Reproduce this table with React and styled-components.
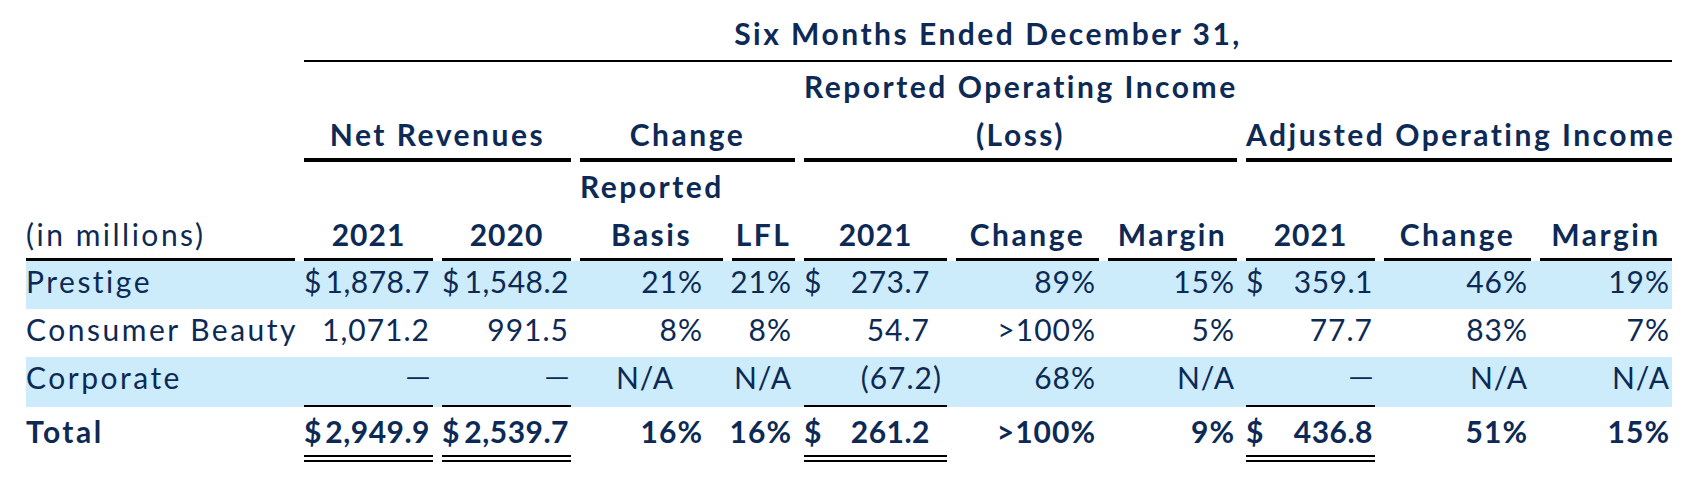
import React from 'react'
import styled, { createGlobalStyle } from 'styled-components'

const GlobalStyle = createGlobalStyle`
  body {
    margin: 0;
    background: #ffffff;
    color: #0c2a55;
    font-family: Lato, "Open Sans", sans-serif;
  }
`

// label, net rev 2021/2020, change basis/lfl, reported op 2021/change/margin, adjusted 2021/change/margin
const COLUMNS = '269px 129px 129px 143px 63px 143px 143px 129px 129px 147px 132px'

const Sheet = styled.div`
  width: 1646px;
  padding-left: 26px;
  font-size: 30px;
  letter-spacing: 2.5px;
`

const Row = styled.div`
  display: grid;
  grid-template-columns: ${COLUMNS};
  column-gap: 9px;
  background: ${p => (p.$shaded ? '#ccecfc' : 'transparent')};
`

const Title = styled.div`
  grid-column: 2 / -1;
  height: 62px;
  box-sizing: border-box;
  padding-top: 9px;
  line-height: 48px;
  font-weight: 700;
  text-align: center;
  white-space: nowrap;
  border-bottom: 2px solid #000;
`

const GroupHead = styled.div`
  grid-column: span ${p => p.$span || 1};
  height: 100px;
  box-sizing: border-box;
  display: flex;
  flex-direction: column;
  justify-content: flex-end;
  line-height: 48px;
  font-weight: 700;
  text-align: center;
  white-space: nowrap;
  border-bottom: ${p => (p.$blank ? 'none' : '4px solid #000')};
`

const ColHead = styled.div`
  height: 99px;
  box-sizing: border-box;
  display: flex;
  flex-direction: column;
  justify-content: flex-end;
  line-height: 48px;
  font-weight: ${p => (p.$light ? 400 : 700)};
  text-align: ${p => (p.$light ? 'left' : 'center')};
  letter-spacing: ${p => (p.$tight ? '1px' : 'inherit')};
  white-space: nowrap;
  border-bottom: 3px solid #000;
`

const Cell = styled.div`
  display: flex;
  justify-content: ${p => (p.$split ? 'space-between' : 'flex-end')};
  align-items: baseline;
  padding: ${p => (p.$bold ? '4px' : '0')} ${p => p.$pad}px ${p => (p.$bold ? '4px' : '8px')} 0;
  line-height: 40px;
  letter-spacing: ${p => (p.$split ? '0.5px' : '1px')};
  white-space: nowrap;
  font-weight: ${p => (p.$bold ? 700 : 400)};
  border-bottom: ${p =>
    p.$rule === 'single' ? '2px solid #000' : p.$rule === 'double' ? '7px double #000' : 'none'};
`

const Label = styled.div`
  padding: ${p => (p.$bold ? '4px 0' : '0 0 8px')};
  line-height: 40px;
  white-space: nowrap;
  font-weight: ${p => (p.$bold ? 700 : 400)};
`

const Dash = styled.span`
  font-family: "DejaVu Sans", sans-serif;
  font-size: 24px;
  letter-spacing: 0;
`

const PADS = [3, 2, 20, 3, 17, 3, 2, 2, 3, 2]
const RULED = [0, 1, 4, 7]

const rows = [
  {
    label: 'Prestige',
    shaded: true,
    values: ['$ 1,878.7', '$1,548.2', '21%', '21%', '$ 273.7', '89%', '15%', '$ 359.1', '46%', '19%'],
  },
  {
    label: 'Consumer Beauty',
    values: ['1,071.2', '991.5', '8%', '8%', '54.7', '>100%', '5%', '77.7', '83%', '7%'],
  },
  {
    label: 'Corporate',
    shaded: true,
    rule: 'single',
    values: ['—', '—', 'N/A', 'N/A', '(67.2)', '68%', 'N/A', '—', 'N/A', 'N/A'],
  },
  {
    label: 'Total',
    bold: true,
    rule: 'double',
    values: ['$2,949.9', '$2,539.7', '16%', '16%', '$ 261.2', '>100%', '9%', '$ 436.8', '51%', '15%'],
  },
]

function padFor(col, value) {
  if (col === 2 && value === 'N/A') return 49
  if (col === 4 && value.startsWith('(')) return 5
  return PADS[col]
}

function Value({ col, value, row }) {
  const split = value.startsWith('$')
  const rule = row.rule && RULED.includes(col) ? row.rule : null
  let content = value
  if (split) {
    content = (
      <>
        <span>$</span>
        <span>{value.slice(1).trim()}</span>
      </>
    )
  } else if (value === '—') {
    content = <Dash>—</Dash>
  }
  return (
    <Cell $split={split} $pad={padFor(col, value)} $bold={row.bold} $rule={rule}>
      {content}
    </Cell>
  )
}

export default function App() {
  return (
    <>
      <GlobalStyle />
      <Sheet>
        <Row>
          <div />
          <Title>Six Months Ended December 31,</Title>
        </Row>
        <Row>
          <GroupHead $blank />
          <GroupHead $span={2}>Net Revenues</GroupHead>
          <GroupHead $span={2}>Change</GroupHead>
          <GroupHead $span={3}>
            <div>Reported Operating Income</div>
            <div>(Loss)</div>
          </GroupHead>
          <GroupHead $span={3}>Adjusted Operating Income</GroupHead>
        </Row>
        <Row>
          <ColHead $light>(in millions)</ColHead>
          <ColHead $tight>2021</ColHead>
          <ColHead $tight>2020</ColHead>
          <ColHead>
            <div>Reported</div>
            <div>Basis</div>
          </ColHead>
          <ColHead>LFL</ColHead>
          <ColHead $tight>2021</ColHead>
          <ColHead>Change</ColHead>
          <ColHead>Margin</ColHead>
          <ColHead $tight>2021</ColHead>
          <ColHead>Change</ColHead>
          <ColHead>Margin</ColHead>
        </Row>
        {rows.map(row => (
          <Row key={row.label} $shaded={row.shaded}>
            <Label $bold={row.bold}>{row.label}</Label>
            {row.values.map((value, i) => (
              <Value key={i} col={i} value={value} row={row} />
            ))}
          </Row>
        ))}
      </Sheet>
    </>
  )
}
